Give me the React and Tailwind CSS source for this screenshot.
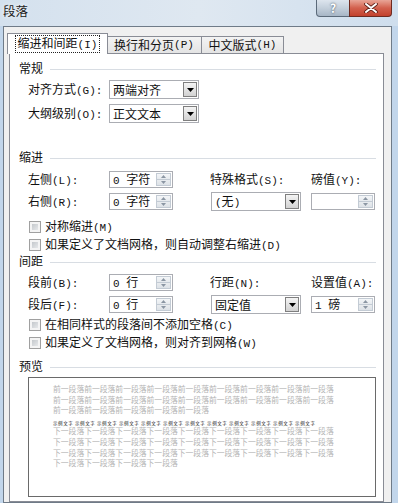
import React from 'react';

function M({ children }) {
  return <span className="font-['Liberation_Mono',monospace] text-[11px]">{children}</span>;
}

function Header({ children }) {
  return (
    <div className="flex h-[14px] items-center">
      <span className="leading-none">{children}</span>
      <span className="ml-[7px] mt-[3px] h-px flex-1 bg-[#d8dde3]" />
    </div>
  );
}

function Arrows() {
  return (
    <span className="mr-px flex h-[13px] w-[15px] flex-col border border-[#c3cbd4]">
      <span className="flex flex-1 items-center justify-center bg-gradient-to-b from-[#f4f6f8] to-[#e6eaee]">
        <svg width="5" height="3" viewBox="0 0 5 3">
          <path d="M0 3h5L2.5 0z" fill="#8b96a3" />
        </svg>
      </span>
      <span className="h-px bg-[#c3cbd4]" />
      <span className="flex flex-1 items-center justify-center bg-gradient-to-b from-[#e9ecef] to-[#dde2e7]">
        <svg width="5" height="3" viewBox="0 0 5 3">
          <path d="M0 0h5L2.5 3z" fill="#8b96a3" />
        </svg>
      </span>
    </span>
  );
}

function Select({ children }) {
  return (
    <div className="flex h-[19px] w-[90px] items-center border border-[#abadb3] bg-white">
      <span className="flex-1 pl-[3px] leading-none">{children}</span>
      <span className="mr-px flex h-[15px] w-[14px] items-center justify-center border border-[#7f7f7f] bg-gradient-to-b from-[#f4f4f4] to-[#d2d2d2]">
        <svg width="7" height="4" viewBox="0 0 7 4">
          <path d="M0 0h7L3.5 4z" fill="#000" />
        </svg>
      </span>
    </div>
  );
}

function Spin({ children }) {
  return (
    <div className="flex h-[17px] w-[64px] items-center border border-[#abadb3] bg-white">
      <span className="flex-1 pl-[3px] leading-none">{children}</span>
      <Arrows />
    </div>
  );
}

function Check({ children }) {
  return (
    <div className="flex h-[14px] items-center pl-[10px]">
      <span className="h-[12px] w-[12px] border border-[#a0a0a0] bg-[#f4f4f4] p-[2px]">
        <span className="block h-full w-full bg-gradient-to-br from-[#c4c8cc] to-[#e6e8ea]" />
      </span>
      <span className="ml-[4px] leading-none">{children}</span>
    </div>
  );
}

function Label({ children }) {
  return <span className="w-[81px] leading-none">{children}</span>;
}

const before = '前一段落前一段落前一段落前一段落前一段落前一段落前一段落前一段落前一段落';
const after = '下一段落下一段落下一段落下一段落下一段落下一段落下一段落下一段落下一段落';

export default function App() {
  return (
    <div className="flex h-[503px] w-[398px] flex-col overflow-hidden bg-[#c2d6eb] font-['Noto_Sans_CJK_SC','Noto_Sans',sans-serif] text-[12px] text-[#111]">
      {/* title bar */}
      <div className="flex h-[26px] items-start bg-gradient-to-r from-[#d4e1ee] via-[#dfe8f1] to-[#cfdeed]">
        <span className="pl-[3px] pt-[5px] text-[12.5px] leading-none text-[#222] [text-shadow:0_0_4px_#fff]">段落</span>
        <div className="ml-auto mr-[6px] flex">
          <span className="flex h-[17px] w-[34px] items-center justify-center rounded-bl-[4px] border border-t-0 border-[#5b6a7a] bg-gradient-to-b from-[#dde5ee] via-[#c3cfdb] to-[#a7b6c6] text-[12px] font-bold leading-none text-white [text-shadow:0_0_2px_#2d3b4a]">
            ?
          </span>
          <span className="-ml-px flex h-[17px] w-[43px] items-center justify-center rounded-br-[4px] border border-t-0 border-[#6e2a20] bg-gradient-to-b from-[#e8a597] via-[#d2604d] to-[#c2412d]">
            <svg width="14" height="10" viewBox="0 0 14 10">
              <path d="M2 1l10 8M12 1L2 9" stroke="#5a1d14" strokeWidth="3.6" strokeLinecap="round" />
              <path d="M2 1l10 8M12 1L2 9" stroke="#fff" strokeWidth="2" strokeLinecap="round" />
            </svg>
          </span>
        </div>
      </div>

      {/* client area */}
      <div className="ml-[3px] mr-[6px] flex flex-1 flex-col border border-[#6f7b88] bg-[#f0f0f0] pl-[5px] pr-[7px] pt-[6px]">
        {/* tabs */}
        <div className="-ml-[2px] flex items-end">
          <div className="relative z-10 -mb-px flex h-[21px] w-[101px] items-center justify-center border border-b-0 border-[#898c95] bg-white">
            <span className="border border-dotted border-[#222] px-[2px] py-px leading-none">
              缩进和间距<M>(I)</M>
            </span>
          </div>
          <div className="-ml-[2px] flex h-[17px] w-[96px] items-center justify-center border border-b-0 border-[#898c95] bg-gradient-to-b from-[#f3f3f3] to-[#e4e4e4] leading-none">
            换行和分页<M>(P)</M>
          </div>
          <div className="-ml-px flex h-[17px] w-[83px] items-center justify-center border border-b-0 border-[#898c95] bg-gradient-to-b from-[#f3f3f3] to-[#e4e4e4] leading-none">
            中文版式<M>(H)</M>
          </div>
        </div>

        {/* panel */}
        <div className="flex flex-1 flex-col border border-[#898c95] bg-white pl-[9px] pr-[7px] pt-[7px]">
          <Header>常规</Header>
          <div className="mt-[5px] flex items-center pl-[9px]">
            <Label>对齐方式<M>(G):</M></Label>
            <Select>两端对齐</Select>
          </div>
          <div className="mt-[5px] flex items-center pl-[9px]">
            <Label>大纲级别<M>(O):</M></Label>
            <Select>正文文本</Select>
          </div>

          <div className="mt-[27px]">
            <Header>缩进</Header>
          </div>
          <div className="mt-[7px] flex h-[17px] items-center pl-[9px]">
            <div className="flex w-[182px] items-center">
              <Label>左侧<M>(L):</M></Label>
              <Spin><M>0 </M>字符</Spin>
            </div>
            <span className="w-[101px] leading-none">特殊格式<M>(S):</M></span>
            <span className="leading-none">磅值<M>(Y):</M></span>
          </div>
          <div className="mt-[4px] flex h-[19px] items-center pl-[9px]">
            <div className="flex w-[182px] items-center">
              <Label>右侧<M>(R):</M></Label>
              <Spin><M>0 </M>字符</Spin>
            </div>
            <div className="w-[101px] pl-px">
              <Select><M>(</M>无<M>)</M></Select>
            </div>
            <Spin />
          </div>
          <div className="mt-[9px]">
            <Check>对称缩进<M>(M)</M></Check>
          </div>
          <div className="mt-[4px]">
            <Check>如果定义了文档网格，则自动调整右缩进<M>(D)</M></Check>
          </div>

          <div className="mt-[2px]">
            <Header>间距</Header>
          </div>
          <div className="mt-[6px] flex h-[17px] items-center pl-[9px]">
            <div className="flex w-[182px] items-center">
              <Label>段前<M>(B):</M></Label>
              <Spin><M>0 </M>行</Spin>
            </div>
            <span className="w-[101px] leading-none">行距<M>(N):</M></span>
            <span className="leading-none">设置值<M>(A):</M></span>
          </div>
          <div className="mt-[4px] flex h-[19px] items-center pl-[9px]">
            <div className="flex w-[182px] items-center">
              <Label>段后<M>(F):</M></Label>
              <Spin><M>0 </M>行</Spin>
            </div>
            <div className="w-[101px] pl-px">
              <Select>固定值</Select>
            </div>
            <Spin><M>1 </M>磅</Spin>
          </div>
          <div className="mt-[4px]">
            <Check>在相同样式的段落间不添加空格<M>(C)</M></Check>
          </div>
          <div className="mt-[4px]">
            <Check>如果定义了文档网格，则对齐到网格<M>(W)</M></Check>
          </div>

          <div className="mt-[9px]">
            <Header>预览</Header>
          </div>
          <div className="ml-[9px] mt-[4px] flex h-[120px] flex-col border border-[#6a6a6a] bg-white pl-[24px] pt-[6px] text-[7.8px] leading-[10.7px] text-[#b4b4b4]">
            <div className="whitespace-nowrap">{before}</div>
            <div className="whitespace-nowrap">{before}</div>
            <div className="whitespace-nowrap">前一段落前一段落前一段落前一段落前一段落</div>
            <div className="mt-[5px] h-[4px] whitespace-nowrap text-[4.5px] leading-[4px] tracking-[0.6px] text-[#111]">
              示例文字 示例文字 示例文字 示例文字 示例文字 示例文字 示例文字 示例文字 示例文字 示例文字 示例文字 示例文字
            </div>
            <div className="mt-[1px] whitespace-nowrap">{after}</div>
            <div className="whitespace-nowrap">{after}</div>
            <div className="whitespace-nowrap">{after}</div>
            <div className="whitespace-nowrap">下一段落下一段落下一段落下一段落</div>
          </div>
        </div>
      </div>
    </div>
  );
}
